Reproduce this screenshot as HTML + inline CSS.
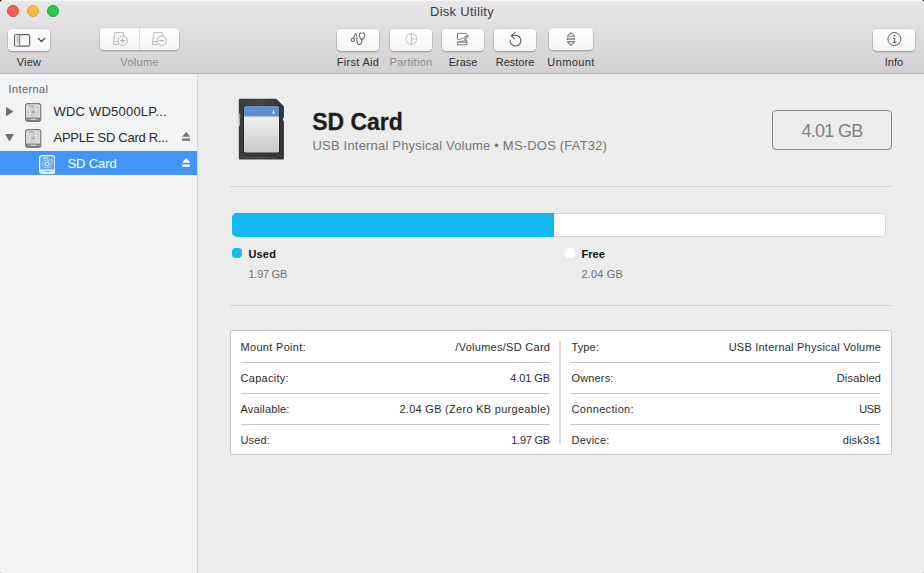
<!DOCTYPE html>
<html lang="en">
<head>
<meta charset="utf-8">
<title>Disk Utility</title>
<style>
html,body{margin:0;padding:0;}
body{width:924px;height:573px;overflow:hidden;background:#000;font-family:"Liberation Sans",sans-serif;-webkit-font-smoothing:antialiased;}
#win{position:absolute;left:0;top:0;width:924px;height:573px;background:#ececec;border-radius:3.500px 3.500px 0 0;overflow:hidden;}
.abs{position:absolute;white-space:nowrap;}
/* toolbar */
#tb{position:absolute;left:0;top:0;width:924px;height:73px;background:linear-gradient(#e9e7e9 0%,#d2d0d2 100%);border-bottom:1px solid #b4b2b4;box-shadow:inset 0 1px 0 #f6f6f6;}
.tl{position:absolute;top:5px;width:12px;height:12px;border-radius:50%;box-sizing:border-box;}
#title{left:0;width:924px;top:3.5px;text-align:center;font-size:13px;line-height:16px;color:#3b3b3b;}
.btn{position:absolute;height:22px;border-radius:4px;background:linear-gradient(#ffffff,#f4f4f4);box-shadow:0 0 0 .5px rgba(0,0,0,.12),0 1px 0 .5px rgba(0,0,0,.18);}
.lbl{position:absolute;top:55px;font-size:11px;line-height:14px;color:#2f2f2f;text-align:center;white-space:nowrap;}
.lbl.dis{color:#8c8a8c;}
.btn svg{position:absolute;left:0;top:0;overflow:visible;}
/* sidebar */
#sb{position:absolute;left:0;top:74px;width:197px;height:499px;background:#f2f3f4;border-right:1px solid #d6d6d6;}
.row{position:absolute;left:0;width:197px;height:24px;}
.row .t{position:absolute;top:4.5px;font-size:13px;line-height:16px;color:#2a2a2a;white-space:nowrap;}
.row.sel{background:#4195f6;}
.row.sel .t{color:#fff;}
/* main */
.sep{position:absolute;left:230px;width:662px;height:1px;background:#d2d2d2;}
.k{position:absolute;font-size:11px;line-height:14px;color:#2b2b2b;white-space:nowrap;}
.v{position:absolute;font-size:11px;line-height:14px;color:#2b2b2b;white-space:nowrap;text-align:right;}
.hl{position:absolute;height:1px;background:#c6c6c6;}
</style>
</head>
<body>
<div id="win">

<!-- ================= TOOLBAR ================= -->
<div id="tb">
  <div class="tl" style="left:7px;background:#fc5b57;border:.5px solid #e0443e;"></div>
  <div class="tl" style="left:27px;background:#fdbc40;border:.5px solid #dea123;"></div>
  <div class="tl" style="left:47px;background:#2dc84d;border:.5px solid #1bac2c;"></div>
  <div class="abs" id="title" style="letter-spacing:0.28px;">Disk Utility</div>

  <!-- View -->
  <div class="btn" style="left:8px;top:29px;width:42px;">
    <svg width="42" height="22" viewBox="0 0 42 22">
      <rect x="6.6" y="5.6" width="15" height="11.6" rx="1.6" fill="#fbfbfb" stroke="#606060" stroke-width="1.2"/>
      <path d="M7.2 6.2h4v10.4h-4z" fill="#ececec"/>
      <path d="M11.500 5.600v11.600" stroke="#8a8a8a" stroke-width="1.500"/>
      <path d="M8.500 8.300h1.400M8.500 10.200h1.400M8.500 12.100h1.400" stroke="#8a8a8a" stroke-width=".9"/>
      <path d="M30.300 9.400l3.200 3.100 3.200-3.100" fill="none" stroke="#404040" stroke-width="1.300" stroke-linecap="round" stroke-linejoin="round"/>
    </svg>
  </div>
  <div class="lbl" id="l_view" style="letter-spacing:0.21px;left:8px;width:42px;">View</div>

  <!-- Volume -->
  <div class="btn" style="left:100px;top:28px;width:79px;">
    <svg width="79" height="22" viewBox="0 0 79 22">
      <path d="M39.5 0v22" stroke="#dcdcdc" stroke-width="1"/>
      <g fill="none" stroke="#bdbdbd" stroke-width="1">
        <path d="M14.900 4.500h8.200l.9 3.600M14.900 4.500l-1.300 9.400v2.700h5M13.600 13.700h4.200"/>
        <circle cx="22.700" cy="12.700" r="4.700" fill="#fafafa" stroke="#b2b2b2"/>
        <path d="M20.200 12.700h5M22.700 10.200v5" stroke="#a2a2a2"/>
        <path d="M53.900 4.500h8.200l.9 3.600M53.900 4.500l-1.300 9.400v2.700h5M52.600 13.700h4.200"/>
        <circle cx="61.700" cy="12.700" r="4.700" fill="#fafafa" stroke="#b2b2b2"/>
        <path d="M59.200 12.700h5" stroke="#a2a2a2"/>
      </g>
    </svg>
  </div>
  <div class="lbl dis" id="l_volume" style="letter-spacing:0.32px;left:100px;width:79px;">Volume</div>

  <!-- First Aid -->
  <div class="btn" style="left:337px;top:29px;width:42px;">
    <svg width="42" height="22" viewBox="0 0 42 22">
      <g fill="none" stroke="#636363" stroke-width="1.050" stroke-linecap="round" stroke-linejoin="round">
        <circle cx="15.850" cy="10.900" r="1.600"/>
        <path d="M16.800 9.600C17.100 7.300 17.700 4.800 18.700 4.800C19.900 4.800 19.900 8 20 12.200C20.100 14.400 20.900 15.400 22.200 15.400C23.800 15.400 24.900 14 24.900 10.900"/>
        <path d="M24.300 4.100H23.600C22.600 4.300 22.200 5.500 22.400 6.600C22.700 8.500 23.600 10.200 24.900 10.800C26.300 10.200 27.400 8.500 27.800 6.400C28 5.300 27.500 4.300 26.500 4.100H25.800"/>
      </g>
    </svg>
  </div>
  <div class="lbl" id="l_firstaid" style="letter-spacing:0.31px;left:330px;width:56px;">First Aid</div>

  <!-- Partition -->
  <div class="btn" style="left:390px;top:29px;width:42px;">
    <svg width="42" height="22" viewBox="0 0 42 22">
      <g fill="none" stroke="#c4c4c4" stroke-width="1.1">
        <circle cx="21.400" cy="10" r="5.400"/>
        <path d="M21.400 4.600v10.800M21.400 10h5.400"/>
      </g>
    </svg>
  </div>
  <div class="lbl dis" id="l_partition" style="letter-spacing:0.29px;left:383px;width:56px;">Partition</div>

  <!-- Erase -->
  <div class="btn" style="left:442px;top:29px;width:42px;">
    <svg width="42" height="22" viewBox="0 0 42 22">
      <g fill="none" stroke="#6a6a6a" stroke-width=".9" stroke-linejoin="round">
        <path d="M24.700 4.400H15.500V10.300C19 10.500 22 9.200 25.300 5.600"/>
        <rect x="15.400" y="13.200" width="9.500" height="2.600"/>
        <path d="M15.500 13L24.900 11.500V13.200"/>
        <path d="M26.500 6.200L22.600 10.900" stroke-width="1.900" stroke="#777"/>
        <path d="M26.200 6.600L23.300 10.100" stroke="#f4f4f4" stroke-width=".6"/>
      </g>
    </svg>
  </div>
  <div class="lbl" id="l_erase" style="letter-spacing:-0.05px;left:435px;width:56px;">Erase</div>

  <!-- Restore -->
  <div class="btn" style="left:494px;top:29px;width:42px;">
    <svg width="42" height="22" viewBox="0 0 42 22">
      <g fill="none" stroke="#5a5a5a" stroke-width="1.1" stroke-linecap="round" stroke-linejoin="round">
        <path d="M17.400 6.700L21.500 6.200A5.400 5.400 0 1 1 16.100 11.500"/>
        <path d="M21.200 3.300L17.300 6.700L20.500 9.800"/>
      </g>
    </svg>
  </div>
  <div class="lbl" id="l_restore" style="letter-spacing:-0.0px;left:487px;width:56px;">Restore</div>

  <!-- Unmount -->
  <div class="btn" style="left:549px;top:28px;width:44px;">
    <svg width="44" height="22" viewBox="0 0 44 22">
      <g fill="none" stroke="#7c7c7c" stroke-width="1.050" stroke-linejoin="round">
        <path d="M21.900 4.500l3.700 3.800h-7.400z"/>
        <path d="M21.900 17.400l3.700-3.800h-7.400z"/>
      </g>
      <rect x="17.900" y="9.900" width="8" height="2.100" fill="#9e9e9e"/>
      <path d="M18.300 9.900v2.100M25.500 9.900v2.100" stroke="#666" stroke-width=".8"/>
    </svg>
  </div>
  <div class="lbl" id="l_unmount" style="letter-spacing:0.38px;left:541px;width:60px;">Unmount</div>

  <!-- Info -->
  <div class="btn" style="left:873px;top:29px;width:42px;">
    <svg width="42" height="22" viewBox="0 0 42 22">
      <circle cx="21.400" cy="10" r="6.500" fill="none" stroke="#5a5a5a" stroke-width="1"/>
      <circle cx="21.450" cy="6.650" r=".85" fill="#4a4a4a"/>
      <path d="M20.100 9.500h1.600v3.900M19.700 13.450h3.700" fill="none" stroke="#4f4f4f" stroke-width="1"/>
    </svg>
  </div>
  <div class="lbl" id="l_info" style="letter-spacing:0.06px;left:866px;width:56px;">Info</div>
</div>

<!-- ================= SIDEBAR ================= -->
<div id="sb">
  <div class="abs" id="t_int" style="letter-spacing:0.41px;left:8.500px;top:8px;font-size:11px;line-height:14px;color:#5e5e5e;">Internal</div>

  

  <!-- row 1 -->
  <div class="row" style="top:25px;">
    <svg class="abs" style="left:6px;top:7.900px;" width="8" height="10" viewBox="0 0 8 10"><path d="M0 0l7.500 4.600-7.500 4.600z" fill="#6f6f6f"/></svg>
    <svg class="abs" style="left:25.300px;top:3.900px;--bd:#7a7a7a;--body:#e1e1e1;--plat:#ececec;--pl:#b2b2b2;--ring:#9c9c9c;--dash:#cdcdcd;--eye:#ececec;--dot:#777777;" width="16.400" height="19" viewBox="0 0 16.400 19"><rect x=".6" y=".6" width="15.200" height="17.800" rx="2.400" fill="var(--body)" stroke="var(--bd)" stroke-width="1.200"/>
        <path d="M1.200 14.400h14v2.200a1.400 1.400 0 0 1-1.400 1.400h-11.200a1.400 1.400 0 0 1-1.400-1.400z" fill="var(--bd)"/>
        <path d="M3.400 16.200h.9M5.500 16.200h5.900M12.800 16.200h.9" stroke="var(--dash)" stroke-width="1.500"/>
        <path d="M3.700 3.200h5.600" stroke="var(--ring)" stroke-width="1.200"/>
        <path d="M12.900 3.300c-.9 1.500-2.400 1.800-4.600 1.800c-3 0-5 1.600-5 3.900c0 2.300 2 3.900 4.900 3.900c3 0 4.900-1.700 4.900-4.300c0-1.800.2-3.700-.2-5.300z" fill="var(--plat)" stroke="var(--pl)" stroke-width=".9"/>
        <ellipse cx="8.200" cy="8.900" rx="2.400" ry="2" fill="var(--eye)" stroke="var(--ring)" stroke-width=".8"/>
        <circle cx="8.200" cy="8.900" r=".9" fill="var(--dot)"/></svg>
    <div class="t" id="t_r1" style="letter-spacing:0.21px;left:53.500px;">WDC WD5000LP...</div>
  </div>
  <!-- row 2 -->
  <div class="row" style="top:51px;">
    <svg class="abs" style="left:5px;top:9px;" width="10" height="8" viewBox="0 0 10 8"><path d="M0 0h9l-4.500 7.600z" fill="#6f6f6f"/></svg>
    <svg class="abs" style="left:25.300px;top:3.900px;--bd:#7a7a7a;--body:#e1e1e1;--plat:#ececec;--pl:#b2b2b2;--ring:#9c9c9c;--dash:#cdcdcd;--eye:#ececec;--dot:#777777;" width="16.400" height="19" viewBox="0 0 16.400 19"><rect x=".6" y=".6" width="15.200" height="17.800" rx="2.400" fill="var(--body)" stroke="var(--bd)" stroke-width="1.200"/>
        <path d="M1.200 14.400h14v2.200a1.400 1.400 0 0 1-1.400 1.400h-11.200a1.400 1.400 0 0 1-1.400-1.400z" fill="var(--bd)"/>
        <path d="M3.400 16.200h.9M5.500 16.200h5.900M12.800 16.200h.9" stroke="var(--dash)" stroke-width="1.500"/>
        <path d="M3.700 3.200h5.600" stroke="var(--ring)" stroke-width="1.200"/>
        <path d="M12.900 3.300c-.9 1.500-2.400 1.800-4.600 1.800c-3 0-5 1.600-5 3.900c0 2.300 2 3.900 4.900 3.900c3 0 4.900-1.700 4.900-4.300c0-1.800.2-3.700-.2-5.300z" fill="var(--plat)" stroke="var(--pl)" stroke-width=".9"/>
        <ellipse cx="8.200" cy="8.900" rx="2.400" ry="2" fill="var(--eye)" stroke="var(--ring)" stroke-width=".8"/>
        <circle cx="8.200" cy="8.900" r=".9" fill="var(--dot)"/></svg>
    <div class="t" id="t_r2" style="letter-spacing:-0.26px;left:53.500px;">APPLE SD Card R...</div>
    <svg class="abs" style="left:181.800px;top:7.200px;color:#727272;" width="8.500" height="8.800" viewBox="0 0 8.500 8.800"><path d="M4.250 0l4.250 4.700h-8.500z" fill="currentColor"/>
        <rect x="0" y="6.500" width="8.500" height="2.300" fill="currentColor"/></svg>
  </div>
  <!-- row 3 (selected) -->
  <div class="row sel" style="top:77px;">
    <svg class="abs" style="left:39px;top:4px;--bd:#f4f9ff;--body:#5aa3f6;--plat:#66abf7;--pl:#b5d4fb;--ring:#d4e6fd;--dash:#7db6f8;--eye:#a9cdfa;--dot:#4a99f5;" width="16.400" height="19" viewBox="0 0 16.400 19"><rect x=".6" y=".6" width="15.200" height="17.800" rx="2.400" fill="var(--body)" stroke="var(--bd)" stroke-width="1.200"/>
        <path d="M1.200 14.400h14v2.200a1.400 1.400 0 0 1-1.400 1.400h-11.200a1.400 1.400 0 0 1-1.400-1.400z" fill="var(--bd)"/>
        <path d="M3.400 16.200h.9M5.500 16.200h5.900M12.800 16.200h.9" stroke="var(--dash)" stroke-width="1.500"/>
        <path d="M3.700 3.200h5.600" stroke="var(--ring)" stroke-width="1.200"/>
        <path d="M12.900 3.300c-.9 1.500-2.400 1.800-4.600 1.800c-3 0-5 1.600-5 3.900c0 2.300 2 3.900 4.900 3.900c3 0 4.900-1.700 4.900-4.300c0-1.800.2-3.700-.2-5.300z" fill="var(--plat)" stroke="var(--pl)" stroke-width=".9"/>
        <ellipse cx="8.200" cy="8.900" rx="2.400" ry="2" fill="var(--eye)" stroke="var(--ring)" stroke-width=".8"/>
        <circle cx="8.200" cy="8.900" r=".9" fill="var(--dot)"/></svg>
    <div class="t" id="t_r3" style="letter-spacing:-0.12px;left:67.500px;">SD Card</div>
    <svg class="abs" style="left:181.800px;top:7.200px;color:#ffffff;" width="8.500" height="8.800" viewBox="0 0 8.500 8.800"><path d="M4.250 0l4.250 4.700h-8.500z" fill="currentColor"/>
        <rect x="0" y="6.500" width="8.500" height="2.300" fill="currentColor"/></svg>
  </div>
</div>

<!-- ================= MAIN ================= -->
<div id="main">
  <!-- SD card icon -->
  <svg class="abs" style="left:238px;top:98px;" width="48" height="63" viewBox="0 0 48 63">
    <defs>
      <linearGradient id="lab" x1="0" y1="0" x2="0" y2="1">
        <stop offset="0" stop-color="#fafafa"/><stop offset="1" stop-color="#c9c9c9"/>
      </linearGradient>
      <linearGradient id="body" x1="0" y1="0" x2="1" y2="0">
        <stop offset="0" stop-color="#3a3a3a"/><stop offset=".5" stop-color="#464646"/><stop offset="1" stop-color="#333"/>
      </linearGradient>
    </defs>
    <path d="M1.800 .7H38.200L45.900 8.300V19.600l-.9 .7v2.200l.9 .7V60.400a1 1 0 0 1-1 1H1.800a1 1 0 0 1-1-1V1.700a1 1 0 0 1 1-1z" fill="url(#body)"/>
    <path d="M.8 15.600h1.400v4.900h-1.400z" fill="#c9a227"/>
    <path d="M.8 20.500h.9v7.200h-.9z" fill="#ececec"/>
    <rect x="5" y="7.600" width="37" height="48" rx="2.200" fill="#2a2a2a"/>
    <rect x="6" y="8.600" width="35" height="46" rx="1.500" fill="url(#lab)"/>
    <path d="M7.500 8.600h32a1.500 1.500 0 0 1 1.500 1.500v8.400h-35v-8.400a1.500 1.500 0 0 1 1.500-1.500z" fill="#5b8fd6"/>
    <path d="M35.500 12l1.300 3.400h-2.600z" fill="#fff"/>
    <path d="M9 57.300h29" stroke="#262626" stroke-width="1"/>
  </svg>

  <div class="abs" id="t_title" style="letter-spacing:-0.04px;left:312.300px;top:107.5px;font-size:23px;line-height:28px;font-weight:bold;color:#1d1d1d;-webkit-text-stroke:.3px #1d1d1d;">SD Card</div>
  <div class="abs" id="t_sub" style="letter-spacing:0.19px;left:312.500px;top:137.5px;font-size:13px;line-height:16px;color:#757575;">USB Internal Physical Volume • MS-DOS (FAT32)</div>

  <div class="abs" style="left:772px;top:110px;width:118px;height:38px;border:1px solid #848484;border-radius:4px;"></div>
  <div class="abs" id="t_size" style="letter-spacing:-0.72px;left:772px;width:120px;top:119.500px;text-align:center;font-size:18px;line-height:22px;color:#808080;">4.01 GB</div>

  <div class="sep" style="top:186px;"></div>

  <!-- usage bar -->
  <div class="abs" style="left:232px;top:212.750px;width:653.500px;height:24.250px;border-radius:5px;background:#fff;box-shadow:inset 0 0 0 1px #d6d6d6;overflow:hidden;">
    <div style="position:absolute;left:0;top:0;width:322px;height:25px;background:#15b9f1;box-shadow:inset 0 0 0 .5px #12aee4;"></div>
  </div>
  <div class="abs" style="left:232px;top:248px;width:10px;height:10px;border-radius:4px;background:#1ab9f0;"></div>
  <div class="abs" id="t_used" style="letter-spacing:0.15px;left:248.500px;top:247px;font-size:11px;line-height:14px;font-weight:bold;color:#111;">Used</div>
  <div class="abs" id="t_usedv" style="letter-spacing:-0.27px;left:248.500px;top:267px;font-size:11px;line-height:14px;color:#6f6f6f;">1.97 GB</div>
  <div class="abs" style="left:565px;top:248px;width:10px;height:10px;border-radius:4px;background:#fff;"></div>
  <div class="abs" id="t_free" style="letter-spacing:0.06px;left:581.500px;top:247px;font-size:11px;line-height:14px;font-weight:bold;color:#111;">Free</div>
  <div class="abs" id="t_freev" style="letter-spacing:0.16px;left:581.500px;top:267px;font-size:11px;line-height:14px;color:#6f6f6f;">2.04 GB</div>

  <div class="sep" style="top:305px;"></div>

  <!-- info table -->
  <div class="abs" style="left:230px;top:330px;width:660px;height:123px;border:1px solid #c3c3c3;border-radius:3px;background:#fff;"></div>
  <div class="abs" style="left:559px;top:341.300px;width:2px;height:102.700px;background:#dadada;"></div>

  <div class="hl" style="left:241px;width:309px;top:362px;"></div>
  <div class="hl" style="left:241px;width:309px;top:393px;"></div>
  <div class="hl" style="left:241px;width:309px;top:424px;"></div>
  <div class="hl" style="left:570px;width:310px;top:362px;"></div>
  <div class="hl" style="left:570px;width:310px;top:393px;"></div>
  <div class="hl" style="left:570px;width:310px;top:424px;"></div>

  <div class="k" id="k1" style="letter-spacing:0.31px;left:240.500px;top:340px;">Mount Point:</div>
  <div class="k" id="k2" style="letter-spacing:0.29px;left:240.500px;top:371px;">Capacity:</div>
  <div class="k" id="k3" style="letter-spacing:0.15px;left:240.500px;top:402px;">Available:</div>
  <div class="k" id="k4" style="letter-spacing:0.15px;left:240.500px;top:433px;">Used:</div>
  <div class="v" id="v1" style="letter-spacing:0.28px;margin-right:-0.28px;right:374px;top:340px;">/Volumes/SD Card</div>
  <div class="v" id="v2" style="letter-spacing:-0.12px;margin-right:0.12px;right:374px;top:371px;">4.01 GB</div>
  <div class="v" id="v3" style="letter-spacing:0.29px;margin-right:-0.29px;right:374px;top:402px;">2.04 GB (Zero KB purgeable)</div>
  <div class="v" id="v4" style="letter-spacing:-0.27px;margin-right:0.27px;right:374px;top:433px;">1.97 GB</div>

  <div class="k" id="k5" style="letter-spacing:0.12px;left:571.500px;top:340px;">Type:</div>
  <div class="k" id="k6" style="letter-spacing:0.15px;left:571.500px;top:371px;">Owners:</div>
  <div class="k" id="k7" style="letter-spacing:0.34px;left:571.500px;top:402px;">Connection:</div>
  <div class="k" id="k8" style="letter-spacing:0.19px;left:571.500px;top:433px;">Device:</div>
  <div class="v" id="v5" style="letter-spacing:0.23px;margin-right:-0.23px;right:43px;top:340px;">USB Internal Physical Volume</div>
  <div class="v" id="v6" style="letter-spacing:0.21px;margin-right:-0.21px;right:43px;top:371px;">Disabled</div>
  <div class="v" id="v7" style="letter-spacing:-0.38px;margin-right:0.38px;right:43px;top:402px;">USB</div>
  <div class="v" id="v8" style="letter-spacing:0.17px;margin-right:-0.17px;right:43px;top:433px;">disk3s1</div>
</div>

<div class="abs" style="left:0;top:572px;width:1px;height:1px;background:#b8b8b8;"></div>
<div class="abs" style="left:923px;top:572px;width:1px;height:1px;background:#b8b8b8;"></div>
</div>
</body>
</html>
